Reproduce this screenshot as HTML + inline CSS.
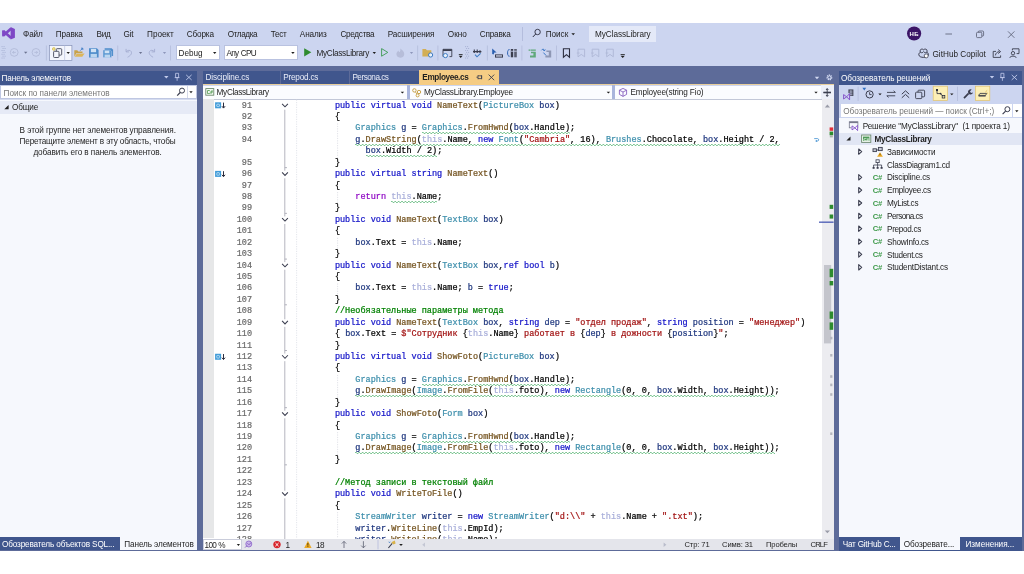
<!DOCTYPE html>
<html lang="ru"><head><meta charset="utf-8"><title>MyClassLibrary</title>
<style>

html,body{margin:0;padding:0;background:#fff;}
body{width:1024px;height:574px;overflow:hidden;position:relative;font-family:"Liberation Sans",sans-serif;}
#root{position:absolute;left:0;top:0;width:1024px;height:574px;overflow:hidden;will-change:transform;opacity:0.9999;}
#root div,#root span.t,#root svg{position:absolute;}
span.t{white-space:pre;display:block;}
.code{font-family:"Liberation Mono",monospace;font-size:8.52px;line-height:11.43px;white-space:pre;color:#000;height:11.43px;-webkit-text-stroke:0.22px currentColor;}
.ln{font-family:"Liberation Mono",monospace;font-size:8.5px;line-height:11.43px;color:#6A6A6A;-webkit-text-stroke:0.2px currentColor;text-align:right;left:222px;width:30px;height:11.43px;}
.k{color:#1414C8;}
.c{color:#8F08C4;}
.m{color:#74531F;}
.ty{color:#3E8FAC;}
.v{color:#1F377F;}
.s{color:#A31515;}
.cm{color:#008000;}
.f{color:#A9AFDA;}
.p{color:#000;}
.sq{background-image:linear-gradient(90deg,#7CC592 0,#7CC592 50%,transparent 50%),linear-gradient(90deg,transparent 50%,#7CC592 50%);background-size:3.4px 0.9px,3.4px 0.9px;background-repeat:repeat-x,repeat-x;background-position:0 calc(100% - 0.9px),0 100%;padding-bottom:0.6px;}

</style></head><body>
<div id="root">
<div style="left:0px;top:23px;width:1024px;height:43px;background:#CCD5F0;"></div>
<div style="left:0px;top:66px;width:1024px;height:485px;background:#5D6B99;"></div>
<span class="t " style="left:23.1px;top:28.96px;font-size:8.2px;line-height:11.48px;color:#1E1E1E;letter-spacing:-0.140px;">Файл</span>
<span class="t " style="left:55.7px;top:28.96px;font-size:8.2px;line-height:11.48px;color:#1E1E1E;letter-spacing:-0.100px;">Правка</span>
<span class="t " style="left:96.6px;top:28.96px;font-size:8.2px;line-height:11.48px;color:#1E1E1E;letter-spacing:-0.345px;">Вид</span>
<span class="t " style="left:123.4px;top:28.96px;font-size:8.2px;line-height:11.48px;color:#1E1E1E;letter-spacing:-0.159px;">Git</span>
<span class="t " style="left:147.1px;top:28.96px;font-size:8.2px;line-height:11.48px;color:#1E1E1E;letter-spacing:-0.068px;">Проект</span>
<span class="t " style="left:186.7px;top:28.96px;font-size:8.2px;line-height:11.48px;color:#1E1E1E;letter-spacing:-0.145px;">Сборка</span>
<span class="t " style="left:227.7px;top:28.96px;font-size:8.2px;line-height:11.48px;color:#1E1E1E;letter-spacing:-0.401px;">Отладка</span>
<span class="t " style="left:270.8px;top:28.96px;font-size:8.2px;line-height:11.48px;color:#1E1E1E;letter-spacing:-0.341px;">Тест</span>
<span class="t " style="left:299.8px;top:28.96px;font-size:8.2px;line-height:11.48px;color:#1E1E1E;letter-spacing:-0.130px;">Анализ</span>
<span class="t " style="left:340.4px;top:28.96px;font-size:8.2px;line-height:11.48px;color:#1E1E1E;letter-spacing:-0.291px;">Средства</span>
<span class="t " style="left:387.7px;top:28.96px;font-size:8.2px;line-height:11.48px;color:#1E1E1E;letter-spacing:-0.089px;">Расширения</span>
<span class="t " style="left:447.8px;top:28.96px;font-size:8.2px;line-height:11.48px;color:#1E1E1E;letter-spacing:-0.013px;">Окно</span>
<span class="t " style="left:479.8px;top:28.96px;font-size:8.2px;line-height:11.48px;color:#1E1E1E;letter-spacing:-0.195px;">Справка</span>
<div style="left:521.5px;top:27px;width:1px;height:14px;background:#B4BDDD;"></div>
<span class="t " style="left:545.8px;top:28.96px;font-size:8.2px;line-height:11.48px;color:#1E1E1E;letter-spacing:-0.064px;">Поиск</span>
<div style="left:589px;top:25.5px;width:66.5px;height:16.5px;background:#E4E9F8;"></div>
<span class="t " style="left:595px;top:29.36px;font-size:8.2px;line-height:11.48px;color:#1E1E1E;letter-spacing:-0.057px;">MyClassLibrary</span>
<div style="left:175.7px;top:45.4px;width:44px;height:14.8px;background:#FFFFFF;border:1px solid #B9C2E0;box-sizing:border-box;"></div>
<span class="t " style="left:178.6px;top:48.36px;font-size:8.2px;line-height:11.48px;color:#1E1E1E;letter-spacing:-0.072px;">Debug</span>
<div style="left:223.5px;top:45.4px;width:74.3px;height:14.8px;background:#FFFFFF;border:1px solid #B9C2E0;box-sizing:border-box;"></div>
<span class="t " style="left:226.4px;top:48.36px;font-size:8.2px;line-height:11.48px;color:#1E1E1E;letter-spacing:-0.655px;word-spacing:0.564px;">Any CPU</span>
<span class="t " style="left:316.4px;top:48.36px;font-size:8.2px;line-height:11.48px;color:#1E1E1E;letter-spacing:-0.271px;">MyClassLibrary</span>
<span class="t " style="left:932.4px;top:48.76px;font-size:8.2px;line-height:11.48px;color:#1E1E1E;letter-spacing:0.028px;word-spacing:-0.120px;">GitHub Copilot</span>
<div style="left:0px;top:71px;width:197px;height:479.5px;background:#F6F8FD;"></div>
<div style="left:0px;top:71px;width:197px;height:14px;background:#40568D;"></div>
<span class="t " style="left:1.5px;top:73.16px;font-size:8.2px;line-height:11.48px;color:#FFFFFF;letter-spacing:-0.111px;word-spacing:0.020px;">Панель элементов</span>
<div style="left:0px;top:85px;width:197px;height:15px;background:#D5DCF0;"></div>
<div style="left:0.4px;top:85.3px;width:196.2px;height:13.8px;background:#FFFFFF;border:0.6px solid #BFC7E2;box-sizing:border-box;"></div>
<div style="left:186.8px;top:86px;width:0.7px;height:12.4px;background:#D5DAEA;"></div>
<span class="t " style="left:3.5px;top:87.76px;font-size:8.2px;line-height:11.48px;color:#767676;letter-spacing:0.004px;word-spacing:-0.095px;">Поиск по панели элементов</span>
<div style="left:0px;top:101px;width:197px;height:12.5px;background:#E6EAF6;"></div>
<span class="t " style="left:12px;top:102.36px;font-size:8.2px;line-height:11.48px;color:#1E1E1E;letter-spacing:-0.153px;">Общие</span>
<span class="t " style="left:19.6px;top:124.96px;font-size:8.2px;line-height:11.48px;color:#1E1E1E;letter-spacing:-0.054px;word-spacing:-0.037px;">В этой группе нет элементов управления.</span>
<span class="t " style="left:19.6px;top:135.96px;font-size:8.2px;line-height:11.48px;color:#1E1E1E;letter-spacing:-0.170px;word-spacing:0.079px;">Перетащите элемент в эту область, чтобы</span>
<span class="t " style="left:33.4px;top:146.76px;font-size:8.2px;line-height:11.48px;color:#1E1E1E;letter-spacing:-0.061px;word-spacing:-0.030px;">добавить его в панель элементов.</span>
<div style="left:0px;top:537px;width:197px;height:13.5px;background:#5D6B99;"></div>
<div style="left:0px;top:537px;width:120px;height:13px;background:#40568D;"></div>
<span class="t " style="left:2px;top:539.46px;font-size:8.2px;line-height:11.48px;color:#FFFFFF;letter-spacing:-0.158px;word-spacing:0.067px;">Обозреватель объектов SQL...</span>
<div style="left:120px;top:537px;width:77px;height:13px;background:#F6F8FD;"></div>
<span class="t " style="left:124.3px;top:539.46px;font-size:8.2px;line-height:11.48px;color:#1E1E1E;letter-spacing:-0.111px;word-spacing:0.020px;">Панель элементов</span>
<div style="left:202.5px;top:71px;width:631.1px;height:478.8px;background:#FFFFFF;"></div>
<div style="left:202.5px;top:70.8px;width:631.1px;height:14px;background:#5D6B99;"></div>
<div style="left:202.5px;top:70.8px;width:217px;height:13.5px;background:#40568D;"></div>
<div style="left:202.5px;top:84px;width:631.1px;height:1.3px;background:#E9CF9C;"></div>
<div style="left:419.2px;top:70.2px;width:79.8px;height:14.6px;background:#F5CC84;"></div>
<span class="t " style="left:205.5px;top:72.36px;font-size:8.2px;line-height:11.48px;color:#E9EDF9;letter-spacing:-0.144px;">Discipline.cs</span>
<span class="t " style="left:283.3px;top:72.36px;font-size:8.2px;line-height:11.48px;color:#E9EDF9;letter-spacing:-0.224px;">Prepod.cs</span>
<span class="t " style="left:352.4px;top:72.36px;font-size:8.2px;line-height:11.48px;color:#E9EDF9;letter-spacing:-0.492px;">Persona.cs</span>
<span class="t " style="left:422.3px;top:72.36px;font-size:8.2px;line-height:11.48px;color:#1E1E1E;letter-spacing:-0.358px;font-weight:700;">Employee.cs</span>
<div style="left:280px;top:71px;width:0.8px;height:13px;background:#5D6B99;"></div>
<div style="left:348.6px;top:71px;width:0.8px;height:13px;background:#5D6B99;"></div>
<div style="left:202.5px;top:85.2px;width:631.1px;height:14px;background:#CCD5F0;"></div>
<div style="left:203px;top:86px;width:203.6px;height:12.5px;background:#FBFCFF;"></div>
<div style="left:409.6px;top:86px;width:202.8px;height:12.5px;background:#FBFCFF;"></div>
<div style="left:615.4px;top:86px;width:205.2px;height:12.5px;background:#FBFCFF;"></div>
<div style="left:821px;top:85.3px;width:12.6px;height:13.4px;background:#EDF0F9;"></div>
<div style="left:406.6px;top:85.4px;width:3px;height:13.4px;background:#A9B5DC;"></div>
<div style="left:612.4px;top:85.4px;width:3px;height:13.4px;background:#A9B5DC;"></div>
<div style="left:202.5px;top:98.6px;width:631.1px;height:1px;background:#C3C8D8;"></div>
<span class="t " style="left:216.6px;top:87.36px;font-size:8.2px;line-height:11.48px;color:#1E1E1E;letter-spacing:-0.307px;">MyClassLibrary</span>
<span class="t " style="left:424px;top:87.36px;font-size:8.2px;line-height:11.48px;color:#1E1E1E;letter-spacing:-0.245px;">MyClassLibrary.Employee</span>
<span class="t " style="left:630.5px;top:87.36px;font-size:8.2px;line-height:11.48px;color:#1E1E1E;letter-spacing:-0.134px;word-spacing:0.043px;">Employee(string Fio)</span>
<div style="left:202.5px;top:99.4px;width:11px;height:439px;background:#E6E7E8;"></div>
<div style="left:821.6px;top:99.4px;width:12px;height:439.6px;background:#ECECF0;"></div>
<div style="left:202.5px;top:539px;width:631.1px;height:10.8px;background:#E4E5EB;"></div>
<div style="left:202.8px;top:539.2px;width:39.4px;height:10.4px;background:#FFFFFF;border:0.6px solid #C9CCDA;box-sizing:border-box;"></div>
<span class="t " style="left:204.5px;top:539.66px;font-size:8.2px;line-height:11.48px;color:#1E1E1E;letter-spacing:-0.665px;word-spacing:0.573px;">100 %</span>
<span class="t " style="left:285.5px;top:539.66px;font-size:8.2px;line-height:11.48px;color:#1E1E1E;">1</span>
<span class="t " style="left:316px;top:539.66px;font-size:8.2px;line-height:11.48px;color:#1E1E1E;letter-spacing:-0.560px;">18</span>
<span class="t " style="left:684.5px;top:540.08px;font-size:7.6px;line-height:10.64px;color:#1E1E1E;letter-spacing:-0.131px;word-spacing:0.047px;">Стр: 71</span>
<span class="t " style="left:722px;top:540.08px;font-size:7.6px;line-height:10.64px;color:#1E1E1E;letter-spacing:-0.084px;word-spacing:-0.001px;">Симв: 31</span>
<span class="t " style="left:766px;top:540.08px;font-size:7.6px;line-height:10.64px;color:#1E1E1E;letter-spacing:-0.151px;">Пробелы</span>
<span class="t " style="left:810.5px;top:540.08px;font-size:7.6px;line-height:10.64px;color:#1E1E1E;letter-spacing:-0.836px;">CRLF</span>
<div id="codeclip" style="left:202.5px;top:99.4px;width:619.5px;height:439.6px;overflow:hidden;">
<div class="ln" style="left:19.5px;top:1.20px;">91</div>
<div class="code" style="left:132.39999999999998px;top:1.20px;"><span class="k">public virtual void </span><span class="m">NameText</span>(<span class="ty">PictureBox</span> <span class="v">box</span>)</div>
<div class="ln" style="left:19.5px;top:12.63px;">92</div>
<div class="code" style="left:132.39999999999998px;top:12.63px;">{</div>
<div class="ln" style="left:19.5px;top:24.06px;">93</div>
<div class="code" style="left:132.39999999999998px;top:24.06px;">    <span class="ty">Graphics</span> <span class="v">g</span> = <span class="sq"><span class="ty">Graphics</span>.<span class="m">FromHwnd</span>(<span class="v">box</span>.Handle)</span>;</div>
<div class="ln" style="left:19.5px;top:35.49px;">94</div>
<div class="code" style="left:132.39999999999998px;top:35.49px;">    <span class="sq"><span class="v">g</span>.<span class="m">DrawString</span>(<span class="f">this</span>.Name, <span class="k">new</span> <span class="ty">Font</span>(<span class="s">&quot;Cambria&quot;</span>, 16), <span class="ty">Brushes</span>.Chocolate, <span class="v">box</span>.Height / 2,</span></div>
<div class="code" style="left:132.39999999999998px;top:46.92px;">      <span class="sq"><span class="v">box</span>.Width / 2)</span>;</div>
<div class="ln" style="left:19.5px;top:58.35px;">95</div>
<div class="code" style="left:132.39999999999998px;top:58.35px;">}</div>
<div class="ln" style="left:19.5px;top:69.78px;">96</div>
<div class="code" style="left:132.39999999999998px;top:69.78px;"><span class="k">public virtual string </span><span class="m">NameText</span>()</div>
<div class="ln" style="left:19.5px;top:81.21px;">97</div>
<div class="code" style="left:132.39999999999998px;top:81.21px;">{</div>
<div class="ln" style="left:19.5px;top:92.64px;">98</div>
<div class="code" style="left:132.39999999999998px;top:92.64px;">    <span class="c">return</span> <span class="sq"><span class="f">this</span>.Name</span>;</div>
<div class="ln" style="left:19.5px;top:104.07px;">99</div>
<div class="code" style="left:132.39999999999998px;top:104.07px;">}</div>
<div class="ln" style="left:19.5px;top:115.50px;">100</div>
<div class="code" style="left:132.39999999999998px;top:115.50px;"><span class="k">public void </span><span class="m">NameText</span>(<span class="ty">TextBox</span> <span class="v">box</span>)</div>
<div class="ln" style="left:19.5px;top:126.93px;">101</div>
<div class="code" style="left:132.39999999999998px;top:126.93px;">{</div>
<div class="ln" style="left:19.5px;top:138.36px;">102</div>
<div class="code" style="left:132.39999999999998px;top:138.36px;">    <span class="v">box</span>.Text = <span class="f">this</span>.Name;</div>
<div class="ln" style="left:19.5px;top:149.79px;">103</div>
<div class="code" style="left:132.39999999999998px;top:149.79px;">}</div>
<div class="ln" style="left:19.5px;top:161.22px;">104</div>
<div class="code" style="left:132.39999999999998px;top:161.22px;"><span class="k">public void </span><span class="m">NameText</span>(<span class="ty">TextBox</span> <span class="v">box</span>,<span class="k">ref bool</span> <span class="v">b</span>)</div>
<div class="ln" style="left:19.5px;top:172.65px;">105</div>
<div class="code" style="left:132.39999999999998px;top:172.65px;">{</div>
<div class="ln" style="left:19.5px;top:184.08px;">106</div>
<div class="code" style="left:132.39999999999998px;top:184.08px;">    <span class="v">box</span>.Text = <span class="f">this</span>.Name; <span class="v">b</span> = <span class="k">true</span>;</div>
<div class="ln" style="left:19.5px;top:195.51px;">107</div>
<div class="code" style="left:132.39999999999998px;top:195.51px;">}</div>
<div class="ln" style="left:19.5px;top:206.94px;">108</div>
<div class="code" style="left:132.39999999999998px;top:206.94px;"><span class="cm">//Необязательные параметры метода</span></div>
<div class="ln" style="left:19.5px;top:218.37px;">109</div>
<div class="code" style="left:132.39999999999998px;top:218.37px;"><span class="k">public void </span><span class="m">NameText</span>(<span class="ty">TextBox</span> <span class="v">box</span>, <span class="k">string</span> <span class="v">dep</span> = <span class="s">&quot;отдел продаж&quot;</span>, <span class="k">string</span> <span class="v">position</span> = <span class="s">&quot;менеджер&quot;</span>)</div>
<div class="ln" style="left:19.5px;top:229.80px;">110</div>
<div class="code" style="left:132.39999999999998px;top:229.80px;">{ <span class="v">box</span>.Text = <span class="s">$&quot;Сотрудник </span>{<span class="f">this</span>.Name}<span class="s"> работает в </span>{<span class="v">dep</span>}<span class="s"> в дожности </span>{<span class="v">position</span>}<span class="s">&quot;</span>;</div>
<div class="ln" style="left:19.5px;top:241.23px;">111</div>
<div class="code" style="left:132.39999999999998px;top:241.23px;">}</div>
<div class="ln" style="left:19.5px;top:252.66px;">112</div>
<div class="code" style="left:132.39999999999998px;top:252.66px;"><span class="k">public virtual void </span><span class="m">ShowFoto</span>(<span class="ty">PictureBox</span> <span class="v">box</span>)</div>
<div class="ln" style="left:19.5px;top:264.09px;">113</div>
<div class="code" style="left:132.39999999999998px;top:264.09px;">{</div>
<div class="ln" style="left:19.5px;top:275.52px;">114</div>
<div class="code" style="left:132.39999999999998px;top:275.52px;">    <span class="ty">Graphics</span> <span class="v">g</span> = <span class="sq"><span class="ty">Graphics</span>.<span class="m">FromHwnd</span>(<span class="v">box</span>.Handle)</span>;</div>
<div class="ln" style="left:19.5px;top:286.95px;">115</div>
<div class="code" style="left:132.39999999999998px;top:286.95px;">    <span class="sq"><span class="v">g</span>.<span class="m">DrawImage</span>(<span class="ty">Image</span>.<span class="m">FromFile</span>(<span class="f">this</span>.foto), <span class="k">new</span> <span class="ty">Rectangle</span>(0, 0, <span class="v">box</span>.Width, <span class="v">box</span>.Height))</span>;</div>
<div class="ln" style="left:19.5px;top:298.38px;">116</div>
<div class="code" style="left:132.39999999999998px;top:298.38px;">}</div>
<div class="ln" style="left:19.5px;top:309.81px;">117</div>
<div class="code" style="left:132.39999999999998px;top:309.81px;"><span class="k">public void </span><span class="m">ShowFoto</span>(<span class="ty">Form</span> <span class="v">box</span>)</div>
<div class="ln" style="left:19.5px;top:321.24px;">118</div>
<div class="code" style="left:132.39999999999998px;top:321.24px;">{</div>
<div class="ln" style="left:19.5px;top:332.67px;">119</div>
<div class="code" style="left:132.39999999999998px;top:332.67px;">    <span class="ty">Graphics</span> <span class="v">g</span> = <span class="sq"><span class="ty">Graphics</span>.<span class="m">FromHwnd</span>(<span class="v">box</span>.Handle)</span>;</div>
<div class="ln" style="left:19.5px;top:344.10px;">120</div>
<div class="code" style="left:132.39999999999998px;top:344.10px;">    <span class="sq"><span class="v">g</span>.<span class="m">DrawImage</span>(<span class="ty">Image</span>.<span class="m">FromFile</span>(<span class="f">this</span>.foto), <span class="k">new</span> <span class="ty">Rectangle</span>(0, 0, <span class="v">box</span>.Width, <span class="v">box</span>.Height))</span>;</div>
<div class="ln" style="left:19.5px;top:355.53px;">121</div>
<div class="code" style="left:132.39999999999998px;top:355.53px;">}</div>
<div class="ln" style="left:19.5px;top:366.96px;">122</div>
<div class="code" style="left:132.39999999999998px;top:366.96px;"></div>
<div class="ln" style="left:19.5px;top:378.39px;">123</div>
<div class="code" style="left:132.39999999999998px;top:378.39px;"><span class="cm">//Метод записи в текстовый файл</span></div>
<div class="ln" style="left:19.5px;top:389.82px;">124</div>
<div class="code" style="left:132.39999999999998px;top:389.82px;"><span class="k">public void </span><span class="m">WriteToFile</span>()</div>
<div class="ln" style="left:19.5px;top:401.25px;">125</div>
<div class="code" style="left:132.39999999999998px;top:401.25px;">{</div>
<div class="ln" style="left:19.5px;top:412.68px;">126</div>
<div class="code" style="left:132.39999999999998px;top:412.68px;">    <span class="ty">StreamWriter</span> <span class="v">writer</span> = <span class="k">new</span> <span class="ty">StreamWriter</span>(<span class="s">&quot;d:\\&quot;</span> + <span class="f">this</span>.Name + <span class="s">&quot;.txt&quot;</span>);</div>
<div class="ln" style="left:19.5px;top:424.11px;">127</div>
<div class="code" style="left:132.39999999999998px;top:424.11px;">    <span class="v">writer</span>.<span class="m">WriteLine</span>(<span class="f">this</span>.EmpId);</div>
<div class="ln" style="left:19.5px;top:435.54px;">128</div>
<div class="code" style="left:132.39999999999998px;top:435.54px;">    <span class="v">writer</span>.<span class="m">WriteLine</span>(<span class="f">this</span>.Name);</div>
</div>
<div style="left:838.8px;top:71px;width:182.80000000000007px;height:479.5px;background:#F6F8FD;"></div>
<div style="left:838.8px;top:71px;width:182.80000000000007px;height:14px;background:#40568D;"></div>
<span class="t " style="left:840.9px;top:73.16px;font-size:8.2px;line-height:11.48px;color:#FFFFFF;letter-spacing:-0.032px;word-spacing:-0.059px;">Обозреватель решений</span>
<div style="left:838.8px;top:85px;width:182.80000000000007px;height:33px;background:#CCD5F0;"></div>
<div style="left:841px;top:104px;width:171px;height:13.2px;background:#FFFFFF;"></div>
<div style="left:1012.5px;top:104px;width:9px;height:13.2px;background:#FFFFFF;"></div>
<span class="t " style="left:843.2px;top:106.36px;font-size:8.2px;line-height:11.48px;color:#767676;letter-spacing:-0.010px;word-spacing:-0.082px;">Обозреватель решений — поиск (Ctrl+;)</span>
<div style="left:838.8px;top:132.5px;width:182.80000000000007px;height:12.6px;background:#E1E6F4;"></div>
<span class="t " style="left:862.7px;top:121.16px;font-size:8.2px;line-height:11.48px;color:#1E1E1E;letter-spacing:-0.148px;word-spacing:0.057px;">Решение &quot;MyClassLibrary&quot;  (1 проекта 1)</span>
<span class="t " style="left:874.5px;top:133.96px;font-size:8.2px;line-height:11.48px;color:#1E1E1E;letter-spacing:-0.276px;font-weight:700;">MyClassLibrary</span>
<span class="t " style="left:887px;top:146.76px;font-size:8.2px;line-height:11.48px;color:#1E1E1E;letter-spacing:-0.115px;">Зависимости</span>
<span class="t " style="left:887px;top:159.66px;font-size:8.2px;line-height:11.48px;color:#1E1E1E;letter-spacing:-0.249px;">ClassDiagram1.cd</span>
<span class="t " style="left:887px;top:172.46px;font-size:8.2px;line-height:11.48px;color:#1E1E1E;letter-spacing:-0.198px;">Discipline.cs</span>
<span class="t " style="left:887px;top:185.36px;font-size:8.2px;line-height:11.48px;color:#1E1E1E;letter-spacing:-0.285px;">Employee.cs</span>
<span class="t " style="left:887px;top:198.16px;font-size:8.2px;line-height:11.48px;color:#1E1E1E;letter-spacing:-0.330px;">MyList.cs</span>
<span class="t " style="left:887px;top:211.06px;font-size:8.2px;line-height:11.48px;color:#1E1E1E;letter-spacing:-0.532px;">Persona.cs</span>
<span class="t " style="left:887px;top:223.86px;font-size:8.2px;line-height:11.48px;color:#1E1E1E;letter-spacing:-0.324px;">Prepod.cs</span>
<span class="t " style="left:887px;top:236.76px;font-size:8.2px;line-height:11.48px;color:#1E1E1E;letter-spacing:-0.270px;">ShowInfo.cs</span>
<span class="t " style="left:887px;top:249.56px;font-size:8.2px;line-height:11.48px;color:#1E1E1E;letter-spacing:-0.304px;">Student.cs</span>
<span class="t " style="left:887px;top:262.46px;font-size:8.2px;line-height:11.48px;color:#1E1E1E;letter-spacing:-0.192px;">StudentDistant.cs</span>
<div style="left:838.8px;top:537px;width:182.80000000000007px;height:13.5px;background:#40568D;"></div>
<div style="left:900px;top:537px;width:60px;height:13px;background:#F6F8FD;"></div>
<span class="t " style="left:842.7px;top:539.46px;font-size:8.2px;line-height:11.48px;color:#FFFFFF;letter-spacing:-0.265px;word-spacing:0.174px;">Чат GitHub C...</span>
<span class="t " style="left:903.8px;top:539.46px;font-size:8.2px;line-height:11.48px;color:#1E1E1E;letter-spacing:-0.125px;">Обозревате...</span>
<span class="t " style="left:965.5px;top:539.46px;font-size:8.2px;line-height:11.48px;color:#FFFFFF;letter-spacing:-0.043px;">Изменения...</span>
<svg width="1024" height="574" viewBox="0 0 1024 574" style="left:0;top:0;"><path d="M10.6 27L14.9 28.9V37.7L10.6 39.6Z" fill="#7E48C6"/>
<path d="M11.2 28.6L3.3 35.6M11.2 38L3.3 31" stroke="#7E48C6" stroke-width="2.7" fill="none"/>
<rect x="2.1" y="30.2" width="1.9" height="6.2" rx="0.6" fill="#7E48C6"/>
<rect x="1.6" y="46.2" width="0.9" height="0.9" fill="#9EA8CC"/>
<rect x="3.6" y="46.2" width="0.9" height="0.9" fill="#9EA8CC"/>
<rect x="2.6" y="48.1" width="0.9" height="0.9" fill="#9EA8CC"/>
<rect x="4.6" y="48.1" width="0.9" height="0.9" fill="#9EA8CC"/>
<rect x="1.6" y="50.0" width="0.9" height="0.9" fill="#9EA8CC"/>
<rect x="3.6" y="50.0" width="0.9" height="0.9" fill="#9EA8CC"/>
<rect x="2.6" y="51.9" width="0.9" height="0.9" fill="#9EA8CC"/>
<rect x="4.6" y="51.9" width="0.9" height="0.9" fill="#9EA8CC"/>
<rect x="1.6" y="53.8" width="0.9" height="0.9" fill="#9EA8CC"/>
<rect x="3.6" y="53.8" width="0.9" height="0.9" fill="#9EA8CC"/>
<rect x="2.6" y="55.7" width="0.9" height="0.9" fill="#9EA8CC"/>
<rect x="4.6" y="55.7" width="0.9" height="0.9" fill="#9EA8CC"/>
<rect x="1.6" y="57.6" width="0.9" height="0.9" fill="#9EA8CC"/>
<rect x="3.6" y="57.6" width="0.9" height="0.9" fill="#9EA8CC"/>
<circle cx="14.2" cy="52.4" r="3.9" fill="none" stroke="#AEB7D6" stroke-width="0.8"/>
<circle cx="36.0" cy="52.4" r="3.9" fill="none" stroke="#AEB7D6" stroke-width="0.8"/>
<path d="M15.8 52.4H12.6M13.9 51.1L12.6 52.4L13.9 53.7" stroke="#AEB7D6" stroke-width="0.8" fill="none"/>
<path d="M34.4 52.4H37.6M36.3 51.1L37.6 52.4L36.3 53.7" stroke="#AEB7D6" stroke-width="0.8" fill="none"/>
<path d="M24.00 51.85h3.4l-1.70 1.9z" fill="#6C7390"/>
<rect x="45.90" y="45.5" width="0.8" height="15.0" fill="#B3BCDB"/>
<rect x="49.6" y="45.6" width="22.3" height="14.8" fill="#F4F6FD" stroke="#8793B8" stroke-width="0.7"/>
<rect x="64.4" y="45.6" width="0.7" height="14.8" fill="#B9C2E0"/>
<circle cx="53.8" cy="49" r="1.4" fill="#F2E38A" stroke="#C9B040" stroke-width="0.6"/>
<rect x="56.3" y="48.7" width="5.4" height="6.4" rx="0.8" fill="none" stroke="#45485A" stroke-width="0.9"/>
<rect x="53.6" y="51.3" width="5.4" height="6.2" rx="0.8" fill="#F4F6FD" stroke="#45485A" stroke-width="0.9"/>
<path d="M66.50 52.05h3.4l-1.70 1.9z" fill="#1E1E1E"/>
<path d="M74.3 56.6V50.3H77.3L78.3 51.4H82.5V53H76.6L74.3 56.6Z" fill="#C8A24A"/>
<path d="M76.9 53.4H84.6L82.3 56.8H74.6Z" fill="#DDB65A"/>
<path d="M80.3 50.6L82.6 48.3M81 48.2H82.8V50" stroke="#3E7CC4" stroke-width="0.9" fill="none"/>
<path d="M89 48.3H96.9L98.6 50V57.5H89Z" fill="#4E8DCB"/>
<rect x="90.9" y="48.9" width="5.2" height="3.3" fill="#CFE2F5"/>
<rect x="90.6" y="53.9" width="6.3" height="3.6" fill="#BBD6F0"/>
<path d="M104.6 48.3H111.6L113.1 49.8V56H104.6Z" fill="#4E8DCB"/>
<path d="M103 50H110.2L111.6 51.4V57.6H103Z" fill="#5B98D2" stroke="#CCD5F0" stroke-width="0.4"/>
<rect x="104.7" y="50.6" width="4.6" height="2.6" fill="#CFE2F5"/>
<rect x="104.6" y="54.6" width="5.4" height="3" fill="#BBD6F0"/>
<rect x="117.40" y="45.5" width="0.8" height="15.0" fill="#B3BCDB"/>
<path d="M126.1 48.9V51.9H129.1M126.3 51.7C127.6 50 130.2 49.7 131.2 51.6C132.2 53.6 130.6 55.6 127.6 57.2" stroke="#A3ACD0" stroke-width="0.9" fill="none"/>
<path d="M139.00 52.10h3.2l-1.60 1.8z" fill="#6C7390"/>
<path d="M154.6 48.9V51.9H151.6M154.4 51.7C153.1 50 150.5 49.7 149.5 51.6C148.5 53.6 150.1 55.6 153.1 57.2" stroke="#A3ACD0" stroke-width="0.9" fill="none"/>
<path d="M162.90 52.10h3.2l-1.60 1.8z" fill="#8E97BB"/>
<rect x="170.00" y="45.5" width="0.8" height="15.0" fill="#B3BCDB"/>
<path d="M213.00 52.05h3.4l-1.70 1.9z" fill="#1E1E1E"/>
<path d="M291.20 52.05h3.4l-1.70 1.9z" fill="#1E1E1E"/>
<path d="M304.2 48.2L311.3 52.3L304.2 56.4Z" fill="#2E8B2E"/>
<path d="M372.60 52.05h3.4l-1.70 1.9z" fill="#1E1E1E"/>
<path d="M381.6 48.6L387.8 52.4L381.6 56.2Z" fill="none" stroke="#3A9A50" stroke-width="0.9"/>
<path d="M400.3 48.4C402 50 404.6 51.4 404.2 54.4C403.9 56.5 402.2 57.7 400.3 57.7C398.2 57.7 396.4 56.4 396.4 54.1C396.4 52.3 397.6 51.4 398.5 50.4C398.7 51.4 399.2 51.9 399.8 52.1C400.3 51 400.6 49.8 400.3 48.4Z" fill="#B6BDD9"/>
<path d="M409.90 52.10h3.2l-1.60 1.8z" fill="#8E97BB"/>
<rect x="417.30" y="45.5" width="0.8" height="15.0" fill="#B3BCDB"/>
<path d="M422.4 56.6V49H425.8L426.9 50.2H431.3V56.6Z" fill="#D2AE55"/>
<circle cx="430.6" cy="55" r="2.1" fill="#EAF2FB" stroke="#3E7CC4" stroke-width="1"/>
<rect x="437.50" y="45.5" width="0.8" height="15.0" fill="#B3BCDB"/>
<path d="M443 56.6V49.3H451.8V56.6H449.5" fill="none" stroke="#3A3D4E" stroke-width="0.9"/>
<rect x="443" y="49.3" width="8.8" height="1.7" fill="#3A3D4E"/>
<circle cx="445.4" cy="55.6" r="2.1" fill="#EAF2FB" stroke="#3E7CC4" stroke-width="1"/>
<rect x="458.8" y="54" width="3.8" height="0.8" fill="#1E1E1E"/>
<path d="M458.80 55.85h3.8l-1.90 2.1z" fill="#1E1E1E"/>
<rect x="465.2" y="46.2" width="0.9" height="0.9" fill="#9EA8CC"/>
<rect x="467.2" y="46.2" width="0.9" height="0.9" fill="#9EA8CC"/>
<rect x="466.2" y="48.1" width="0.9" height="0.9" fill="#9EA8CC"/>
<rect x="468.2" y="48.1" width="0.9" height="0.9" fill="#9EA8CC"/>
<rect x="465.2" y="50.0" width="0.9" height="0.9" fill="#9EA8CC"/>
<rect x="467.2" y="50.0" width="0.9" height="0.9" fill="#9EA8CC"/>
<rect x="466.2" y="51.9" width="0.9" height="0.9" fill="#9EA8CC"/>
<rect x="468.2" y="51.9" width="0.9" height="0.9" fill="#9EA8CC"/>
<rect x="465.2" y="53.8" width="0.9" height="0.9" fill="#9EA8CC"/>
<rect x="467.2" y="53.8" width="0.9" height="0.9" fill="#9EA8CC"/>
<rect x="466.2" y="55.7" width="0.9" height="0.9" fill="#9EA8CC"/>
<rect x="468.2" y="55.7" width="0.9" height="0.9" fill="#9EA8CC"/>
<rect x="465.2" y="57.6" width="0.9" height="0.9" fill="#9EA8CC"/>
<rect x="467.2" y="57.6" width="0.9" height="0.9" fill="#9EA8CC"/>
<path d="M473 51.6H481.4M474.3 49.6V53M477.2 49.4V53M480 50.2V53" stroke="#3A3D4E" stroke-width="1.1" fill="none"/>
<path d="M475 54.6L477 56.8L480.6 53.4" stroke="#3E7CC4" stroke-width="1.1" fill="none"/>
<rect x="486.90" y="45.5" width="0.8" height="15.0" fill="#B3BCDB"/>
<path d="M492.2 48.4L496.6 52.6H494.4L493.6 54.4L492.2 54Z" fill="#2A5FB0"/>
<rect x="495" y="54.4" width="8" height="3.2" fill="#3A3D4E"/><rect x="496" y="55.3" width="6" height="1.3" fill="#C9D0E6"/>
<path d="M509.6 49.6C508 49.6 507.6 50.6 507.6 52.9C507.6 55.2 508 56.2 509.6 56.2" stroke="#2A5FB0" stroke-width="1" fill="none"/>
<rect x="510.8" y="49" width="2.4" height="8.3" fill="#3A3D4E"/><rect x="514.2" y="49" width="2.6" height="8.3" fill="#5A5E70"/><rect x="510.8" y="50.8" width="6" height="0.8" fill="#CCD5F0"/>
<rect x="521.50" y="45.5" width="0.8" height="15.0" fill="#B3BCDB"/>
<path d="M528.6 49.6H530.6V50.8H528.6ZM531 49.6H535.8V50.8H531ZM531 51.8H535.8V57.4H530V55.6H533.4V53.2H531Z" fill="#5FA97A"/>
<path d="M541.4 50.3C542.3 48.7 544.2 48.9 544.6 50.6L545.4 49.6M544.6 50.6L543.2 50.3" stroke="#2F6FC2" stroke-width="0.9" fill="none"/>
<path d="M546.4 50.4H551.2V57.4H545.4V55.6H548.8V52H546.4Z" fill="#8E97B4"/>
<path d="M543.4 52.6L546 55.4" stroke="#2F6FC2" stroke-width="0.9"/>
<rect x="556.00" y="45.5" width="0.8" height="15.0" fill="#B3BCDB"/>
<path d="M563.4 48.7H569.5V57.2L566.45 54.6L563.4 57.2Z" fill="none" stroke="#2B2D3E" stroke-width="1.1"/>
<path d="M578 49.2H584.6V56.8L581.3 54.4L578 56.8Z" fill="none" stroke="#AEB7D6" stroke-width="0.9"/>
<path d="M576.8 53H579.6" stroke="#AEB7D6" stroke-width="0.8"/>
<path d="M592.2 49.2H598.8000000000001V56.8L595.5 54.4L592.2 56.8Z" fill="none" stroke="#AEB7D6" stroke-width="0.9"/>
<path d="M591.0 53H593.8000000000001" stroke="#AEB7D6" stroke-width="0.8"/>
<path d="M606.7 49.2H613.3000000000001V56.8L610.0 54.4L606.7 56.8Z" fill="none" stroke="#AEB7D6" stroke-width="0.9"/>
<path d="M605.5 53H608.3000000000001" stroke="#AEB7D6" stroke-width="0.8"/>
<rect x="620.6" y="54" width="4.2" height="0.8" fill="#1E1E1E"/>
<path d="M620.60 55.80h4.2l-2.10 2.2z" fill="#1E1E1E"/>
<circle cx="537.6" cy="32" r="2.7" fill="none" stroke="#2B2D3E" stroke-width="0.9"/><path d="M535.7 34L532.8 37" stroke="#2B2D3E" stroke-width="1"/>
<path d="M571.40 33.20h3.6l-1.80 2z" fill="#1E1E1E"/>
<circle cx="914.1" cy="33.5" r="7.1" fill="#3B1466"/>
<text x="914.3" y="35.6" font-family="Liberation Sans, sans-serif" font-size="6" font-weight="700" fill="#FFFFFF" text-anchor="middle" letter-spacing="0.35">НБ</text>
<path d="M945.4 34H952" stroke="#555A6E" stroke-width="0.8"/>
<rect x="976.5" y="32.3" width="5.3" height="5.3" rx="1" fill="none" stroke="#555A6E" stroke-width="0.8"/><path d="M978.3 32.3V31.9Q978.3 31 979.3 31H982.6Q983.6 31 983.6 32V35.2Q983.6 36 982.8 36H981.8" fill="none" stroke="#555A6E" stroke-width="0.8"/>
<path d="M1008 31.4L1014.4 37.8M1014.4 31.4L1008 37.8" stroke="#555A6E" stroke-width="0.8"/>
<path d="M920.2 50.6C920.2 49 922.6 48.6 923.6 49.8C924.6 48.6 927 49 927 50.6V52.4C928 53 928.4 53.6 928.4 54.6C928.4 56.6 925.8 57.4 923.6 57.4C921.4 57.4 918.8 56.6 918.8 54.6C918.8 53.6 919.2 53 920.2 52.4Z" fill="none" stroke="#2B2D3E" stroke-width="0.9"/>
<path d="M920.4 52.4C921.6 53 922.8 52.8 923.6 51.6C924.4 52.8 925.6 53 926.8 52.4" fill="none" stroke="#2B2D3E" stroke-width="0.8"/>
<circle cx="926.2" cy="55.9" r="2" fill="#FFFFFF" stroke="#2B2D3E" stroke-width="0.7"/>
<path d="M996 51.4H993.2V57.4H1000.6V55.4" fill="none" stroke="#3A3D4E" stroke-width="0.9"/><path d="M995.4 55.4C995.8 53 997.2 51.8 999.4 51.6M998.2 49.6L1000.6 51.6L998.2 53.6" fill="none" stroke="#3A3D4E" stroke-width="0.9"/>
<circle cx="1013" cy="53.2" r="1.7" fill="none" stroke="#3A3D4E" stroke-width="0.9"/><path d="M1009.8 57.8C1010 55.6 1016 55.6 1016.2 57.8" fill="none" stroke="#3A3D4E" stroke-width="0.9"/><path d="M1012.4 50.4V48.8H1019V53.6H1016.6" fill="none" stroke="#3A3D4E" stroke-width="0.9"/>
<path d="M164.10 76.00h4.4l-2.20 2.6z" fill="#C3CCEC"/>
<path d="M175.6 73.3H178.6V77.6H175.6ZM174.7 77.6H179.5M177.1 77.6V80.8" fill="none" stroke="#C3CCEC" stroke-width="0.8"/>
<path d="M186.20000000000002 74.9L191.6 79.9M191.6 74.9L186.20000000000002 79.9" stroke="#C3CCEC" stroke-width="0.9"/>
<path d="M989.80 76.00h4.4l-2.20 2.6z" fill="#C3CCEC"/>
<path d="M1000.9 73.3H1003.9V77.6H1000.9ZM1000.0 77.6H1004.8M1002.4 77.6V80.8" fill="none" stroke="#C3CCEC" stroke-width="0.8"/>
<path d="M1011.6999999999999 74.9L1017.1 79.9M1017.1 74.9L1011.6999999999999 79.9" stroke="#C3CCEC" stroke-width="0.9"/>
<circle cx="182.0" cy="90.6" r="2.5" fill="none" stroke="#3A3D4E" stroke-width="1"/><path d="M180.20000000000002 92.5L177.20000000000002 95.6" stroke="#3A3D4E" stroke-width="1.2"/>
<path d="M189.30 91.25h3.4l-1.70 1.9z" fill="#1E1E1E"/>
<circle cx="1007.4000000000001" cy="109.19999999999999" r="2.5" fill="none" stroke="#3A3D4E" stroke-width="1"/><path d="M1005.6 111.1L1002.6 114.19999999999999" stroke="#3A3D4E" stroke-width="1.2"/>
<path d="M1015.10 110.25h3.4l-1.70 1.9z" fill="#1E1E1E"/>
<path d="M8.6 104.9V109.2H4.3Z" fill="#1E1E1E"/>
<path d="M476.4 77.2H478M478 75.2V79.2M478 75.8H481.6V78.6H478M481.6 75.2V79.2" fill="none" stroke="#3A3D4E" stroke-width="0.8"/>
<path d="M488.6 74.6L494.2 80.2M494.2 74.6L488.6 80.2" stroke="#3A3D4E" stroke-width="0.9"/>
<path d="M814.80 76.70h4.4l-2.20 2.6z" fill="#D3DAF2"/>
<circle cx="829.4" cy="77.4" r="2.2" fill="none" stroke="#D3DAF2" stroke-width="1.5" stroke-dasharray="1.1 0.65"/><circle cx="829.4" cy="77.4" r="1.5" fill="none" stroke="#D3DAF2" stroke-width="0.9"/>
<rect x="205.8" y="88.6" width="8" height="6.6" fill="#F2F9F2" stroke="#5E7F5E" stroke-width="0.8"/><text x="209.8" y="94" font-family="Liberation Sans, sans-serif" font-size="4.6" font-weight="700" fill="#3E8E3E" text-anchor="middle">C#</text>
<path d="M400.70 91.65h3.4l-1.70 1.9z" fill="#1E1E1E"/>
<circle cx="414.4" cy="90.4" r="1.7" fill="none" stroke="#C49A3A" stroke-width="0.9"/><circle cx="419" cy="92" r="1.7" fill="none" stroke="#C49A3A" stroke-width="0.9"/><circle cx="417.6" cy="95.4" r="1.5" fill="none" stroke="#C49A3A" stroke-width="0.9"/><path d="M415.4 91.8L416.8 94" stroke="#C49A3A" stroke-width="0.8"/>
<path d="M606.70 91.65h3.4l-1.70 1.9z" fill="#1E1E1E"/>
<path d="M623 88.4L626.6 90.2V94.4L623 96.4L619.4 94.4V90.2Z M619.4 90.2L623 92L626.6 90.2M623 92V96.4" fill="none" stroke="#7B4FB8" stroke-width="0.8"/>
<path d="M814.30 91.65h3.4l-1.70 1.9z" fill="#1E1E1E"/>
<path d="M827.2 88.6V96.4M823.6 92.5H830.8M826 90L827.2 88.6L828.4 90M826 95L827.2 96.4L828.4 95" stroke="#3A3D4E" stroke-width="0.9" fill="none"/><rect x="823.4" y="91.7" width="7.6" height="1.6" fill="#3A3D4E"/>
<path d="M824.8 107.4L827.4 104.6L830 107.4Z" fill="#9A9CA8"/>
<path d="M824.8 530.4L827.4 533.2L830 530.4Z" fill="#9A9CA8"/>
<rect x="824" y="265" width="7.2" height="78.4" fill="#C4C5CC"/>
<rect x="829.6" y="127.4" width="3.6" height="3.4" fill="#E0303A"/>
<rect x="829.6" y="131.6" width="3.6" height="3.6" fill="#2E8B2E"/>
<rect x="829.6" y="204.8" width="3.6" height="4.1" fill="#2E8B2E"/>
<rect x="829.6" y="214.5" width="3.6" height="4.1" fill="#2E8B2E"/>
<rect x="829.6" y="268.8" width="3.6" height="8.4" fill="#2E8B2E"/>
<rect x="829.6" y="281" width="3.6" height="4.4" fill="#2E8B2E"/>
<rect x="829.6" y="311.5" width="3.6" height="7.3" fill="#2E8B2E"/>
<rect x="829.6" y="322.4" width="3.6" height="7.4" fill="#2E8B2E"/>
<rect x="829.8" y="135.2" width="3" height="2.2" fill="#A9B4A9"/>
<rect x="830.2" y="336.8" width="2.2" height="2.6" fill="#B5B6BE"/>
<rect x="830.2" y="354" width="2.2" height="2.6" fill="#B5B6BE"/>
<rect x="830.2" y="375.2" width="2.2" height="2.6" fill="#B5B6BE"/>
<rect x="830.2" y="383.6" width="2.2" height="2.6" fill="#B5B6BE"/>
<rect x="830.2" y="393.2" width="2.2" height="2.6" fill="#B5B6BE"/>
<rect x="830.2" y="432.4" width="2.2" height="2.6" fill="#B5B6BE"/>
<rect x="819" y="221.6" width="14.6" height="1.1" fill="#2B3FA8"/>
<path d="M814.2 138.6H817.6C819 138.6 819 141 817.6 141H815.8M816.8 140L815.8 141L816.8 142" fill="none" stroke="#3E8ED0" stroke-width="0.8"/>
<rect x="215.1" y="102.30" width="6" height="6" fill="#3F9BD8"/><circle cx="218.1" cy="105.30" r="1.9" fill="#A9D4F0"/><circle cx="218.1" cy="105.30" r="0.9" fill="#3F9BD8"/>
<path d="M223.5 102.60V107.90M221.9 106.20L223.5 108.10L225.1 106.20" stroke="#2B2D3E" stroke-width="1" fill="none"/>
<rect x="215.1" y="170.88" width="6" height="6" fill="#3F9BD8"/><circle cx="218.1" cy="173.88" r="1.9" fill="#A9D4F0"/><circle cx="218.1" cy="173.88" r="0.9" fill="#3F9BD8"/>
<path d="M223.5 171.18V176.48M221.9 174.78L223.5 176.68L225.1 174.78" stroke="#2B2D3E" stroke-width="1" fill="none"/>
<rect x="215.1" y="353.76" width="6" height="6" fill="#3F9BD8"/><circle cx="218.1" cy="356.76" r="1.9" fill="#A9D4F0"/><circle cx="218.1" cy="356.76" r="0.9" fill="#3F9BD8"/>
<path d="M223.5 354.06V359.36M221.9 357.66L223.5 359.56L225.1 357.66" stroke="#2B2D3E" stroke-width="1" fill="none"/>
<path d="M282.1 103.80L285 106.80L287.9 103.80" stroke="#3C3F50" stroke-width="1.05" fill="none"/>
<path d="M284.8 109.70V170.68" stroke="#9C9EAA" stroke-width="0.75" fill="none"/>
<path d="M282.1 172.38L285 175.38L287.9 172.38" stroke="#3C3F50" stroke-width="1.05" fill="none"/>
<path d="M284.8 178.28V216.40" stroke="#9C9EAA" stroke-width="0.75" fill="none"/>
<path d="M282.1 218.10L285 221.10L287.9 218.10" stroke="#3C3F50" stroke-width="1.05" fill="none"/>
<path d="M284.8 224.00V262.12" stroke="#9C9EAA" stroke-width="0.75" fill="none"/>
<path d="M282.1 263.82L285 266.82L287.9 263.82" stroke="#3C3F50" stroke-width="1.05" fill="none"/>
<path d="M284.8 269.72V319.27" stroke="#9C9EAA" stroke-width="0.75" fill="none"/>
<path d="M282.1 320.97L285 323.97L287.9 320.97" stroke="#3C3F50" stroke-width="1.05" fill="none"/>
<path d="M284.8 326.87V353.56" stroke="#9C9EAA" stroke-width="0.75" fill="none"/>
<path d="M282.1 355.26L285 358.26L287.9 355.26" stroke="#3C3F50" stroke-width="1.05" fill="none"/>
<path d="M284.8 361.16V410.71" stroke="#9C9EAA" stroke-width="0.75" fill="none"/>
<path d="M282.1 412.41L285 415.41L287.9 412.41" stroke="#3C3F50" stroke-width="1.05" fill="none"/>
<path d="M284.8 418.31V490.72" stroke="#9C9EAA" stroke-width="0.75" fill="none"/>
<path d="M282.1 492.42L285 495.42L287.9 492.42" stroke="#3C3F50" stroke-width="1.05" fill="none"/>
<path d="M284.8 498.32V539.00" stroke="#9C9EAA" stroke-width="0.75" fill="none"/>
<path d="M284.8 167.65H287" stroke="#9C9EAA" stroke-width="0.75" fill="none"/>
<path d="M284.8 213.37H287" stroke="#9C9EAA" stroke-width="0.75" fill="none"/>
<path d="M284.8 259.09H287" stroke="#9C9EAA" stroke-width="0.75" fill="none"/>
<path d="M284.8 304.81H287" stroke="#9C9EAA" stroke-width="0.75" fill="none"/>
<path d="M284.8 350.53H287" stroke="#9C9EAA" stroke-width="0.75" fill="none"/>
<path d="M284.8 407.68H287" stroke="#9C9EAA" stroke-width="0.75" fill="none"/>
<path d="M284.8 464.83H287" stroke="#9C9EAA" stroke-width="0.75" fill="none"/>
<path d="M296.6 99.6V538.4" stroke="#D9DBE2" stroke-width="0.7" stroke-dasharray="1.2 1.2"/>
<path d="M337.6 123.46V157.75" stroke="#D4D6DE" stroke-width="0.7" stroke-dasharray="1.2 1.2"/>
<path d="M337.6 192.04V203.47" stroke="#D4D6DE" stroke-width="0.7" stroke-dasharray="1.2 1.2"/>
<path d="M337.6 237.76V249.19" stroke="#D4D6DE" stroke-width="0.7" stroke-dasharray="1.2 1.2"/>
<path d="M337.6 283.48V294.91" stroke="#D4D6DE" stroke-width="0.7" stroke-dasharray="1.2 1.2"/>
<path d="M337.6 374.92V397.78" stroke="#D4D6DE" stroke-width="0.7" stroke-dasharray="1.2 1.2"/>
<path d="M337.6 432.07V454.93" stroke="#D4D6DE" stroke-width="0.7" stroke-dasharray="1.2 1.2"/>
<path d="M337.6 512.08V538.40" stroke="#D4D6DE" stroke-width="0.7" stroke-dasharray="1.2 1.2"/>
<path d="M236.80 544.10h3.2l-1.60 1.8z" fill="#1E1E1E"/>
<circle cx="248.8" cy="544" r="3" fill="#C9B5EA" stroke="#8A63C9" stroke-width="0.8"/><path d="M245 547.6L247 545.6M247.4 543.2L249 544.8L251 542.6" stroke="#7B4FB8" stroke-width="0.8" fill="none"/>
<circle cx="277" cy="544.6" r="3.7" fill="#D8262C"/><path d="M275.4 543L278.6 546.2M278.6 543L275.4 546.2" stroke="#FFFFFF" stroke-width="1"/>
<path d="M307.9 540.8L311.6 547.9H304.2Z" fill="#E9A825"/><rect x="307.5" y="543" width="0.8" height="2.6" fill="#3A2A00"/><rect x="307.5" y="546.2" width="0.8" height="0.8" fill="#3A2A00"/>
<path d="M344 548V541.4M341.8 543.6L344 541.4L346.2 543.6" stroke="#5A5E70" stroke-width="0.8" fill="none"/>
<path d="M363.4 541.2V547.8M361.2 545.6L363.4 547.8L365.6 545.6" stroke="#5A5E70" stroke-width="0.8" fill="none"/>
<rect x="377.60" y="540" width="0.8" height="9.399999999999977" fill="#B3BCDB"/>
<path d="M388.4 548L392.2 543.4" stroke="#3A3D4E" stroke-width="1.1"/><path d="M391.4 542.2L394.8 540.6L395.6 543.6L393.4 544.6Z" fill="#D9B24A"/><path d="M388.8 541.6L390.2 543M390.2 541.6L388.8 543" stroke="#3E7CC4" stroke-width="0.6"/>
<path d="M399.20 544.00h3.6l-1.80 2z" fill="#1E1E1E"/>
<path d="M663.6 542.6L666.4 544.8L663.6 547Z" fill="#B9BCCB"/>
<path d="M425 542.6L422.2 544.8L425 547Z" fill="#C4C7D4"/>
<rect x="848.4" y="89.4" width="5" height="6.6" fill="#4A4D5E"/><path d="M849.4 91.2H852.4M849.4 92.8H852.4M849.4 94.4H852.4M850.9 90V95.6" stroke="#CCD5F0" stroke-width="0.5"/>
<rect x="843" y="93.2" width="6.9" height="6.6" fill="#CCD5F0"/>
<path d="M843.6 94.6L846.7 96.8L843.6 99ZM849.6 93.6L846.7 96.8L849.6 99.9Z" fill="none" stroke="#8250C8" stroke-width="0.95" stroke-linejoin="round"/>
<rect x="857.70" y="86.6" width="0.8" height="14.400000000000006" fill="#B3BCDB"/>
<circle cx="869.6" cy="94.4" r="3.6" fill="none" stroke="#3A3D4E" stroke-width="1"/><path d="M869.6 92.2V94.6H871.6" fill="none" stroke="#3A3D4E" stroke-width="0.9"/><path d="M862.4 87.8H866.2L864.3 90.4Z" fill="#2F6FC2"/>
<path d="M878.30 93.45h3.4l-1.70 1.9z" fill="#1E1E1E"/>
<path d="M887 92.4H895.4M893.6 90.8L895.4 92.4M886.8 95.8H895.2M888.6 97.4L886.8 95.8" stroke="#3A3D4E" stroke-width="0.9" fill="none"/>
<path d="M901.8 94.2L905.5 90.8L909.2 94.2M901.8 97.8L905.5 94.4L909.2 97.8" stroke="#3A3D4E" stroke-width="1" fill="none"/>
<rect x="918" y="90.2" width="6.6" height="6.6" rx="0.8" fill="none" stroke="#3A3D4E" stroke-width="0.9"/><rect x="915.6" y="92.2" width="6.2" height="6.4" rx="0.8" fill="#CCD5F0" stroke="#3A3D4E" stroke-width="0.9"/>
<rect x="933.2" y="86.2" width="14.2" height="14.2" fill="#FCEFB6" stroke="#E3C268" stroke-width="0.7"/>
<rect x="936" y="89" width="2" height="2" fill="#2B2D3E"/><path d="M937 91V93.6H940.6M940.6 93.6L943 96.4" stroke="#2B2D3E" stroke-width="0.8" fill="none"/><rect x="942.2" y="95.4" width="2.6" height="2.6" fill="none" stroke="#2B2D3E" stroke-width="0.8"/><circle cx="940.6" cy="93.6" r="0.9" fill="#2B2D3E"/>
<path d="M950.10 93.45h3.4l-1.70 1.9z" fill="#1E1E1E"/>
<rect x="957.10" y="86.6" width="0.8" height="14.400000000000006" fill="#B3BCDB"/>
<path d="M964 98.2L968.6 93.4" stroke="#3A3D4E" stroke-width="1.7"/><path d="M971.6 89.4C970 88.8 968.2 89.8 968 91.6C967.9 92.6 968.4 93.6 969.4 94.2C970.8 95 972.6 94.2 973 92.6L971 93L970 91.6Z" fill="#3A3D4E"/>
<rect x="975.6" y="86.2" width="14.2" height="14.2" fill="#FCEFB6" stroke="#E3C268" stroke-width="0.7"/>
<path d="M978.6 95.4H985.6L986.6 93.4H980Z" fill="none" stroke="#2B2D3E" stroke-width="0.8"/><rect x="978.6" y="95.6" width="7" height="0.9" fill="#2B2D3E"/><path d="M985.4 92L987.2 90.4M986.6 93.2H988" stroke="#C9A030" stroke-width="0.6"/>
<rect x="849.3" y="121.8" width="8.6" height="6" fill="#F6F8FD" stroke="#77798C" stroke-width="0.8"/><rect x="849.3" y="121.6" width="8.6" height="1.5" fill="#77798C"/>
<rect x="851.4" y="125" width="6.9" height="5.6" fill="#F6F8FD"/>
<path d="M852 125.9L854.9 127.9L852 129.9ZM857.6 125.2L854.9 127.9L857.6 130.6Z" fill="none" stroke="#8250C8" stroke-width="0.9" stroke-linejoin="round"/>
<path d="M850.5 136.4V140.5H846.4Z" fill="#1E1E1E"/>
<rect x="861.6" y="135" width="9.2" height="7.4" fill="#EEF6EE" stroke="#6E8A72" stroke-width="0.9"/><rect x="863" y="136.6" width="6.4" height="4.2" fill="#4E9A58"/><text x="866.2" y="140.5" font-family="Liberation Sans, sans-serif" font-size="4.4" font-weight="700" fill="#F2FAF2" text-anchor="middle">C#</text>
<path d="M858.7 148.9L861.7 151.6L858.7 154.29999999999998Z" fill="none" stroke="#3A3D4E" stroke-width="1.05" stroke-linejoin="round"/>
<rect x="873" y="148.8" width="3.4" height="2.8" fill="#C9CCD8" stroke="#3A3D4E" stroke-width="0.9"/><rect x="878.4" y="147.4" width="3.8" height="3.2" fill="#C9CCD8" stroke="#3A3D4E" stroke-width="0.9"/><path d="M876.4 150H878.4" stroke="#3A3D4E" stroke-width="0.9"/><path d="M880 152.2L882.9 156.8H877.1Z" fill="#E9A825"/><rect x="879.7" y="153.6" width="0.6" height="1.6" fill="#3A2A00"/>
<rect x="876" y="159.8" width="3.2" height="2.8" fill="none" stroke="#3A3D4E" stroke-width="0.8"/><path d="M877.6 162.6V165M873.6 167.4V165H881.6V167.4M877.6 165V167.4" stroke="#3A3D4E" stroke-width="0.8" fill="none"/><rect x="872.6" y="167" width="2" height="1.8" fill="#3A3D4E"/><rect x="876.6" y="167" width="2" height="1.8" fill="#3A3D4E"/><rect x="880.6" y="167" width="2" height="1.8" fill="#3A3D4E"/>
<path d="M858.7 174.60000000000002L861.7 177.3L858.7 180.0Z" fill="none" stroke="#3A3D4E" stroke-width="1.05" stroke-linejoin="round"/>
<text x="872.8" y="180.0" font-family="Liberation Sans, sans-serif" font-size="7.6" font-weight="700" fill="#3E9A4A" letter-spacing="-0.2">C#</text>
<path d="M858.7 187.5L861.7 190.2L858.7 192.89999999999998Z" fill="none" stroke="#3A3D4E" stroke-width="1.05" stroke-linejoin="round"/>
<text x="872.8" y="192.89999999999998" font-family="Liberation Sans, sans-serif" font-size="7.6" font-weight="700" fill="#3E9A4A" letter-spacing="-0.2">C#</text>
<path d="M858.7 200.3L861.7 203L858.7 205.7Z" fill="none" stroke="#3A3D4E" stroke-width="1.05" stroke-linejoin="round"/>
<text x="872.8" y="205.7" font-family="Liberation Sans, sans-serif" font-size="7.6" font-weight="700" fill="#3E9A4A" letter-spacing="-0.2">C#</text>
<path d="M858.7 213.20000000000002L861.7 215.9L858.7 218.6Z" fill="none" stroke="#3A3D4E" stroke-width="1.05" stroke-linejoin="round"/>
<text x="872.8" y="218.6" font-family="Liberation Sans, sans-serif" font-size="7.6" font-weight="700" fill="#3E9A4A" letter-spacing="-0.2">C#</text>
<path d="M858.7 226.0L861.7 228.7L858.7 231.39999999999998Z" fill="none" stroke="#3A3D4E" stroke-width="1.05" stroke-linejoin="round"/>
<text x="872.8" y="231.39999999999998" font-family="Liberation Sans, sans-serif" font-size="7.6" font-weight="700" fill="#3E9A4A" letter-spacing="-0.2">C#</text>
<path d="M858.7 238.9L861.7 241.6L858.7 244.29999999999998Z" fill="none" stroke="#3A3D4E" stroke-width="1.05" stroke-linejoin="round"/>
<text x="872.8" y="244.29999999999998" font-family="Liberation Sans, sans-serif" font-size="7.6" font-weight="700" fill="#3E9A4A" letter-spacing="-0.2">C#</text>
<path d="M858.7 251.70000000000002L861.7 254.4L858.7 257.1Z" fill="none" stroke="#3A3D4E" stroke-width="1.05" stroke-linejoin="round"/>
<text x="872.8" y="257.1" font-family="Liberation Sans, sans-serif" font-size="7.6" font-weight="700" fill="#3E9A4A" letter-spacing="-0.2">C#</text>
<path d="M858.7 264.6L861.7 267.3L858.7 270.0Z" fill="none" stroke="#3A3D4E" stroke-width="1.05" stroke-linejoin="round"/>
<text x="872.8" y="270.0" font-family="Liberation Sans, sans-serif" font-size="7.6" font-weight="700" fill="#3E9A4A" letter-spacing="-0.2">C#</text></svg>
</div>
</body></html>
